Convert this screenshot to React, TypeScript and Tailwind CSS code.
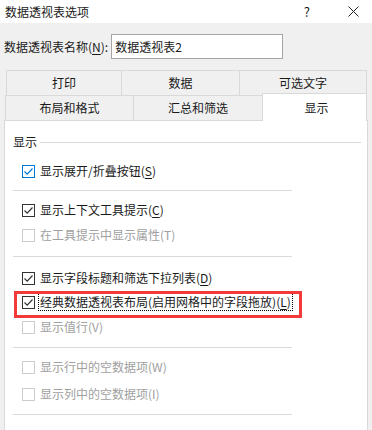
import React from 'react';

const font = { fontFamily: '"Noto Sans CJK SC", "Noto Sans", sans-serif' };

type CheckProps = {
  label: string;
  hotkey: string;
  checked?: boolean;
  disabled?: boolean;
  hot?: boolean;
  focused?: boolean;
  className?: string;
};

function Check({ label, hotkey, checked, disabled, hot, focused, className = '' }: CheckProps) {
  const box = disabled
    ? 'border-[#cccccc]'
    : hot
    ? 'border-[#0078d7]'
    : 'border-[#333333]';
  const stroke = hot ? '#0078d7' : '#333333';
  return (
    <div className={`flex items-center h-[18px] pl-[17px] ${className}`}>
      <div className={`w-[13px] h-[13px] border bg-white shrink-0 flex items-center justify-center ${box}`}>
        {checked && (
          <svg width="11" height="11" viewBox="0 0 11 11">
            <path d="M1.5 5.5 L4.2 8.2 L9.5 2.5" fill="none" stroke={stroke} strokeWidth="1.2" />
          </svg>
        )}
      </div>
      <span
        className={`ml-[4px] text-[12px] leading-[16px] whitespace-nowrap px-[1px] ${
          disabled ? 'text-[#a0a0a0]' : 'text-[#1a1a1a]'
        } ${focused ? 'outline outline-1 outline-dotted outline-black' : ''}`}
      >
        {label}(<span className={disabled ? '' : 'underline underline-offset-2'}>{hotkey}</span>)
      </span>
    </div>
  );
}

function Sep({ className = '' }: { className?: string }) {
  return <div className={`ml-[8px] w-[279px] h-px bg-[#dadada] ${className}`} />;
}

export default function App() {
  return (
    <div className="w-[372px] h-[430px] bg-[#f0f0f0] overflow-hidden text-[#1a1a1a]" style={font}>
      {/* title bar */}
      <div className="h-[23px] bg-white flex items-center">
        <span className="pl-[5px] text-[12px] leading-[16px]">数据透视表选项</span>
        <span className="ml-auto mr-[38px] text-[13px] leading-[16px]">?</span>
        <svg className="mr-[13px]" width="11" height="11" viewBox="0 0 11 11">
          <path d="M0.5 0.5 L10.5 10.5 M10.5 0.5 L0.5 10.5" stroke="#222" strokeWidth="1" />
        </svg>
      </div>

      {/* name row */}
      <div className="h-[47px] flex items-center pl-[4px]">
        <span className="text-[12px] leading-[16px] whitespace-nowrap">
          数据透视表名称(<span className="underline underline-offset-2">N</span>):
        </span>
        <div className="ml-[3px] w-[172px] h-[25px] bg-white border border-[#a5a5a5] flex items-center pl-[3px] text-[12px] leading-[16px]">
          数据透视表2
        </div>
      </div>

      {/* tabs */}
      <div className="flex ml-[6px] w-[361px] h-[25px] border-t border-l border-r border-[#d9d9d9] text-[12px]">
        <div className="w-[115px] flex items-center justify-center border-r border-[#d9d9d9]">打印</div>
        <div className="w-[118px] flex items-center justify-center border-r border-[#d9d9d9]">数据</div>
        <div className="flex-1 flex items-center justify-center">可选文字</div>
      </div>
      <div className="flex ml-[5px] h-[25px] text-[12px] relative">
        <div className="w-[128px] flex items-center justify-center border-t border-l border-[#d9d9d9]">布局和格式</div>
        <div className="w-[129px] flex items-center justify-center border-t border-l border-[#d9d9d9]">汇总和筛选</div>
        <div className="w-[105px] h-[28px] -mt-[2px] bg-white border-t border-l border-r border-[#d9d9d9] flex items-center justify-center relative z-10 pl-[4px]">
          显示
        </div>
      </div>

      {/* panel */}
      <div className="ml-[4px] w-[364px] h-[320px] bg-white border border-[#d9d9d9] flex flex-col">
        <div className="mt-[12px] h-[18px] flex items-center pl-[8px]">
          <span className="text-[12px] leading-[16px]">显示</span>
          <div className="ml-[3px] w-[321px] h-px bg-[#dadada]" />
        </div>
        <Check className="mt-[11px]" label="显示展开/折叠按钮" hotkey="S" checked hot />
        <Sep className="mt-[10px]" />
        <Check className="mt-[10px]" label="显示上下文工具提示" hotkey="C" checked />
        <Check className="mt-[7px]" label="在工具提示中显示属性" hotkey="T" disabled />
        <Sep className="mt-[12px]" />
        <Check className="mt-[12px]" label="显示字段标题和筛选下拉列表" hotkey="D" checked />
        <div className="relative mt-[6px]">
          <Check label="经典数据透视表布局(启用网格中的字段拖放)" hotkey="L" checked focused />
          <div className="absolute left-[9px] top-[-2px] w-[288px] h-[27px] border-[3px] border-[#f23a3a]" />
        </div>
        <Check className="mt-[7px]" label="显示值行" hotkey="V" disabled />
        <Sep className="mt-[11px]" />
        <Check className="mt-[10px]" label="显示行中的空数据项" hotkey="W" disabled />
        <Check className="mt-[9px]" label="显示列中的空数据项" hotkey="I" disabled />
        <Sep className="mt-[11px]" />
      </div>
    </div>
  );
}
